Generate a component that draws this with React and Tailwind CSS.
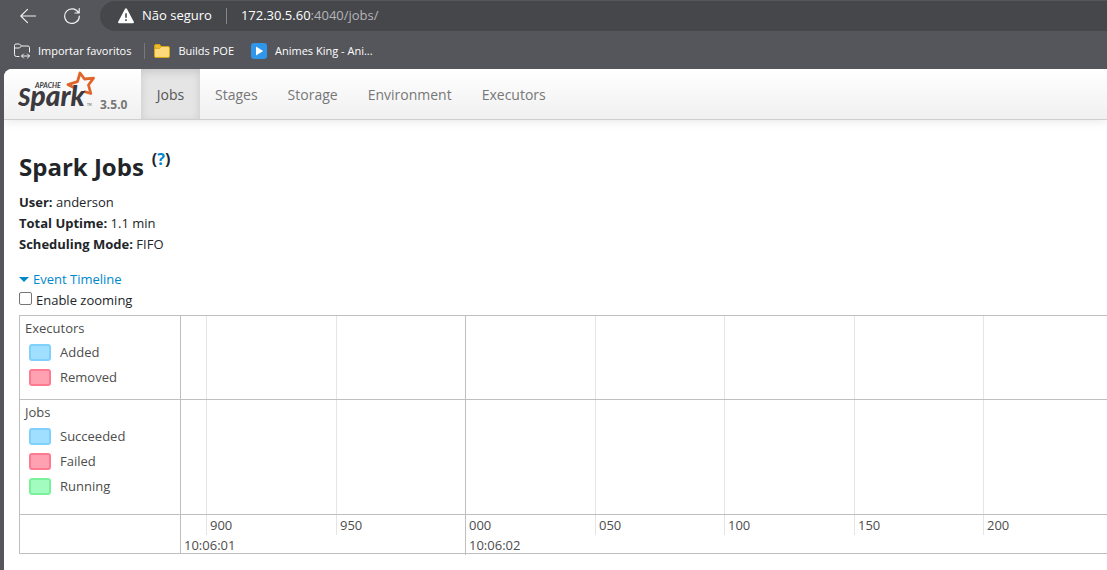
const COLS = "grid grid-cols-[25fr_130fr_129fr_130fr_129fr_130fr_129fr_124fr]";

const TICKS = [
  { label: "900" },
  { label: "950" },
  { label: "000", major: true },
  { label: "050" },
  { label: "100" },
  { label: "150" },
  { label: "200" },
];

const SWATCHES = {
  blue: "border-[#7fd0fb] bg-[#a0dfff]",
  red: "border-[#ff7a91] bg-[#ffa1b0]",
  green: "border-[#7cf09b] bg-[#a2fcc0]",
};

const GROUPS = [
  {
    name: "Executors",
    height: "h-21",
    items: [
      { label: "Added", color: "blue" },
      { label: "Removed", color: "red" },
    ],
  },
  {
    name: "Jobs",
    height: "h-[115px]",
    items: [
      { label: "Succeeded", color: "blue" },
      { label: "Failed", color: "red" },
      { label: "Running", color: "green" },
    ],
  },
];

const TABS = ["Jobs", "Stages", "Storage", "Environment", "Executors"];

function BrowserBar() {
  return (
    <header className="text-white">
      <div className="flex h-8 items-center pt-px pb-px">
        <button type="button" aria-label="Voltar" className="ml-5 flex size-4 items-center justify-center">
          <svg viewBox="0 0 16 16" className="size-4" fill="none" stroke="#f0f0f0" strokeWidth="1.1" strokeLinecap="round" strokeLinejoin="round">
            <path d="M15.5 8H.8M7.5 1.3.8 8l6.700 6.700" />
          </svg>
        </button>
        <button type="button" aria-label="Atualizar" className="ml-7 flex size-4 items-center justify-center">
          <svg viewBox="0 0 16 16" className="size-4" fill="none" stroke="#f0f0f0" strokeWidth="1.2" strokeLinecap="round" strokeLinejoin="round">
            <path d="M14.6 5A7.300 7.300 0 1 0 15.300 8M15.200.7V5H11" />
          </svg>
        </button>
        <div className="ml-5 flex h-[30px] grow items-center rounded-l-full bg-[#46474b] pl-[18px] text-[13px]">
          <button type="button" className="flex items-center gap-2">
            <svg viewBox="0 0 16 16" className="size-4">
              <path d="M7.100.8a1 1 0 0 1 1.800 0l6.900 13a.9.9 0 0 1-.8 1.400H1a.9.9 0 0 1-.8-1.400z" fill="#fff" />
              <path d="M8 5.200v4.600M8 11.300v1.700" stroke="#46474b" strokeWidth="1.600" />
            </svg>
            Não seguro
          </button>
          <span className="mx-[14px] h-4 w-px bg-[#85868a]" />
          <div role="textbox" aria-label="Endereço" contentEditable suppressContentEditableWarning className="grow text-[#b4b5b8] outline-none">
            <span className="text-white">172.30.5.60</span>:4040/jobs/
          </div>
        </div>
      </div>
      <nav aria-label="Favoritos" className="flex h-[37px] items-center pt-px pl-[14px] text-[11px]">
        <a href="#importar" className="flex items-center gap-2">
          <svg viewBox="0 0 16 16" className="size-4" fill="none" stroke="#f0f0f0" strokeWidth="1" strokeLinecap="round" strokeLinejoin="round">
            <path d="M5 13.500H2.500a2 2 0 0 1-2-2v-9a1.500 1.500 0 0 1 1.500-1.500h3.500l2 2H14A1.500 1.500 0 0 1 15.500 4.500V9M.5 5h5l2-2" />
            <path d="M7.500 13h8M9.500 11l-2 2 2 2M13.500 11l2 2-2 2" />
          </svg>
          Importar favoritos
        </a>
        <span className="mr-[9px] ml-[13px] h-4 w-px bg-[#77787c]" />
        <a href="#builds" className="flex items-center gap-2">
          <svg viewBox="0 0 16 16" className="size-4">
            <path d="M.5 3A1.500 1.500 0 0 1 2 1.500h3.500l2 2H14A1.500 1.500 0 0 1 15.500 5v8a1.500 1.500 0 0 1-1.500 1.500H2A1.500 1.500 0 0 1 .5 13z" fill="#ffda7b" stroke="#d9a515" />
            <path d="M1 2.500 2 1.500h3.500l1.800 2L5.500 5.500H1z" fill="#efb92c" stroke="#c8960f" strokeWidth=".6" />
          </svg>
          Builds POE
        </a>
        <a href="#animes" className="ml-[17px] flex items-center gap-2">
          <svg viewBox="0 0 16 16" className="size-4">
            <rect width="16" height="16" rx="3" fill="#2f96ea" />
            <path d="M5 3.500v9L12.200 8z" fill="#fff" />
          </svg>
          Animes King - Ani...
        </a>
      </nav>
    </header>
  );
}

function SparkLogo() {
  return (
    <svg viewBox="0 0 78 44" className="h-11 w-[78px]" role="img" aria-label="Apache Spark">
      <path
        d="M58 19.500 50 15.700 59.500 12.700 62 4 66.500 10 75.500 9.200 70.500 16 72.800 24.500 66 22.500"
        fill="none"
        stroke="#e0652a"
        strokeWidth="2.800"
        strokeLinejoin="round"
      />
      <text x="17" y="19" fontFamily="Lato, sans-serif" fontSize="7" fontWeight="700" fontStyle="italic" fill="#3c3a3e">
        APACHE
      </text>
      <text x="0" y="37" fontFamily="Lato, sans-serif" fontWeight="900" fontStyle="italic" fill="#3c3a3e">
        <tspan fontSize="24">S</tspan>
        <tspan fontSize="28">park</tspan>
      </text>
      <text x="69" y="37" fontFamily="Lato, sans-serif" fontSize="3" fill="#3c3a3e">TM</text>
    </svg>
  );
}

function NavBar() {
  return (
    <nav aria-label="Spark" className="flex h-[51px] items-stretch border-b border-[#cfcfcf] bg-linear-to-b from-white to-[#f0f0f0] shadow-[0_1px_10px_rgba(0,0,0,0.1)]">
      <a href="#home" className="flex w-[137px] shrink-0 items-start pl-[14px]">
        <SparkLogo />
        <span className="pt-[27px] pl-1 text-xs leading-[18px] font-bold text-[#777]">3.5.0</span>
      </a>
      {TABS.map((tab, i) => (
        <a
          key={tab}
          href={"#" + tab.toLowerCase()}
          aria-current={i === 0 ? "page" : undefined}
          className={
            i === 0
              ? "flex w-[59px] items-center justify-center bg-[#e5e5e5] pt-[2px] text-sm text-[#555] shadow-[inset_0_3px_8px_rgba(0,0,0,0.125)]"
              : "flex items-center px-[15px] pt-[2px] text-sm text-[#777]"
          }
        >
          {tab}
        </a>
      ))}
    </nav>
  );
}

function GridLines() {
  return (
    <div className={COLS + " h-full"}>
      <span />
      {TICKS.map((t) => (
        <span key={t.label} className={t.major ? "border-l border-[#bfbfbf]" : "border-l border-[#e5e5e5]"} />
      ))}
    </div>
  );
}

function Timeline() {
  return (
    <section aria-label="Event Timeline" className="border-y border-l border-[#bfbfbf] text-[13px] text-[#4d4d4d]">
      {GROUPS.map((g) => (
        <div key={g.name} className={"flex border-b border-[#bfbfbf] " + g.height}>
          <div className="w-[161px] shrink-0 border-r border-[#bfbfbf] px-[5px] pt-[2px]">
            <div className="leading-5">{g.name}</div>
            <ul className="pt-[2px] pl-1">
              {g.items.map((it) => (
                <li key={it.label} className="flex h-[25px] items-center gap-[9px]">
                  <span className={"h-[17px] w-[22px] rounded-[3px] border-2 " + SWATCHES[it.color]} />
                  {it.label}
                </li>
              ))}
            </ul>
          </div>
          <div className="grow">
            <GridLines />
          </div>
        </div>
      ))}
      <div className="flex h-[38px]">
        <div className="w-[161px] shrink-0 border-r border-[#bfbfbf]" />
        <div className="flex grow flex-col leading-5">
          <div className={COLS + " h-5 shrink-0"}>
            <span />
            {TICKS.map((t) => (
              <span key={t.label} className={t.major ? "border-l border-[#bfbfbf] pl-[3px]" : "border-l border-[#e5e5e5] pl-[3px]"}>
                {t.label}
              </span>
            ))}
          </div>
          <div className="grid h-[18px] grid-cols-[284fr_642fr]">
            <span className="pl-[3px]">10:06:01</span>
            <span className="border-l border-[#bfbfbf] pl-[3px]">10:06:02</span>
          </div>
        </div>
      </div>
    </section>
  );
}

export default function App() {
  return (
    <div className="flex min-h-screen flex-col overflow-hidden bg-[#55565b] font-['Open_Sans','Noto_Sans',sans-serif]">
      <BrowserBar />
      <div className="ml-1 grow overflow-hidden rounded-tl-lg bg-white text-[#212529]">
        <NavBar />
        <main className="pt-[27px] pb-4 pl-[15px] text-[13px] leading-[21px]">
          <h1 className="flex h-10 items-center gap-2 text-2xl font-bold">
            Spark Jobs
            <sup className="text-base font-bold">
              (<a href="#help" className="text-[#0088cc]">?</a>)
            </sup>
          </h1>
          <ul className="pt-[5px]">
            <li><strong>User:</strong> anderson</li>
            <li><strong>Total Uptime:</strong> 1.1 min</li>
            <li><strong>Scheduling Mode:</strong> FIFO</li>
          </ul>
          <button type="button" aria-expanded="true" className="mt-[14px] flex items-center gap-1 text-[#0088cc]">
            <svg viewBox="0 0 10 5" className="h-[5px] w-[10px]"><path d="M0 0h10L5 5z" fill="#08c" /></svg>
            Event Timeline
          </button>
          <div className="flex items-center gap-1 pb-1">
            <input id="zooming" type="checkbox" className="mb-1 size-[13px] appearance-none rounded-[2px] border border-[#767676] bg-white" />
            <label htmlFor="zooming">Enable zooming</label>
          </div>
          <Timeline />
        </main>
      </div>
    </div>
  );
}
